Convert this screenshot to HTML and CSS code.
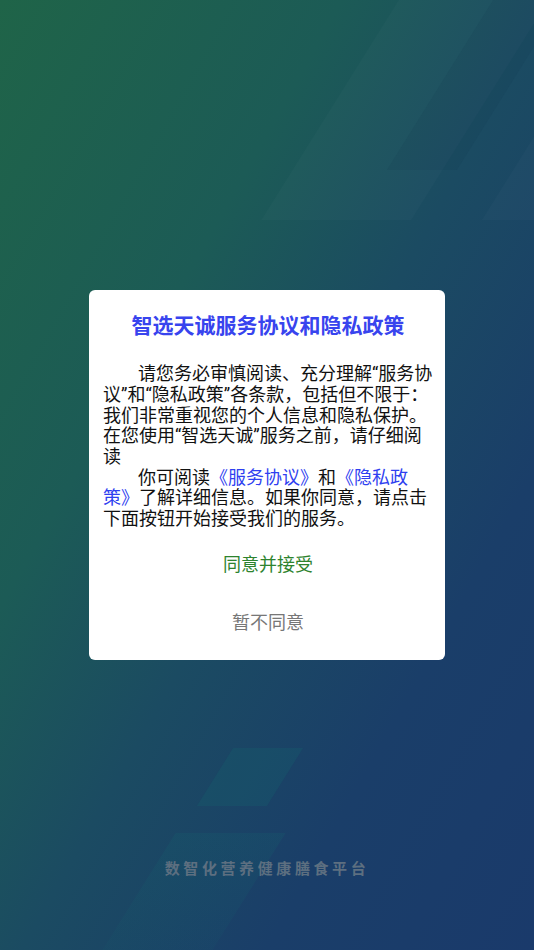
FILE: index.html
```html
<!DOCTYPE html>
<html lang="zh-CN">
<head>
  <meta charset="UTF-8">
  <title>智选天诚</title>
  <meta name="viewport" content="width=device-width, initial-scale=1.0">
  <link rel="stylesheet" href="styles.css">
</head>
<body>
  <div class="splash">
    <!-- decorative stripes -->
    <div class="stripe stripe-a"></div>
    <div class="stripe stripe-b"></div>
    <div class="stripe stripe-c"></div>
    <div class="stripe stripe-d"></div>
    <div class="stripe stripe-e"></div>

    <div class="slogan">数智化营养健康膳食平台</div>
  </div>

  <!-- Privacy dialog -->
  <div class="overlay">
    <div class="dialog">
      <div class="dialog-title">智选天诚服务协议和隐私政策</div>
      <div class="dialog-body">
        <p>请您务必审慎阅读、充分理解“服务协议”和“隐私政策”各条款，包括但不限于：我们非常重视您的个人信息和隐私保护。在您使用“智选天诚”服务之前，请仔细阅读</p>
        <p>你可阅读<a href="#">《服务协议》</a>和<a href="#">《隐私政策》</a>了解详细信息。如果你同意，请点击下面按钮开始接受我们的服务。</p>
      </div>
      <div class="dialog-actions">
        <button class="btn btn-agree">同意并接受</button>
        <button class="btn btn-refuse">暂不同意</button>
      </div>
    </div>
  </div>
</body>
</html>
```

FILE: styles.css
```css
* {
  box-sizing: border-box;
}

html, body {
  margin: 0;
  padding: 0;
  height: 100%;
  font-family: "Roboto", "Noto Sans CJK SC", sans-serif;
}

.splash {
  position: relative;
  height: 100%;
  overflow: hidden;
  display: flex;
  flex-direction: column;
  justify-content: flex-end;
  align-items: center;
  background: linear-gradient(to bottom right, #1f6448 0%, #1c5b56 32%, #1b4b62 52%, #1a3e69 75%, #1a3a6b 100%);
}

.stripe {
  position: absolute;
  transform: skewX(-32deg);
}

.stripe-a {
  left: 330px;
  top: 0;
  width: 150px;
  height: 220px;
  background: rgba(255,255,255,0.018);
}

.stripe-b {
  left: 440px;
  top: 0;
  width: 70px;
  height: 170px;
  background: rgba(10,40,60,0.08);
}

.stripe-c {
  left: 510px;
  top: 130px;
  width: 60px;
  height: 90px;
  background: rgba(255,255,255,0.02);
}

.stripe-d {
  left: 215px;
  top: 748px;
  width: 70px;
  height: 58px;
  background: rgba(20,100,110,0.28);
}

.stripe-e {
  left: 135px;
  top: 833px;
  width: 110px;
  height: 130px;
  background: linear-gradient(180deg, rgba(20,100,110,0.22), rgba(20,100,110,0.08));
}

.slogan {
  position: relative;
  margin-bottom: 72px;
  font-size: 15px;
  font-weight: bold;
  letter-spacing: 3.6px;
  color: #5d6f80;
}

.overlay {
  position: fixed;
  inset: 0;
  display: flex;
  align-items: center;
  justify-content: center;
}

.dialog {
  width: 356px;
  background: #fff;
  border-radius: 6px;
  padding: 22px 12px 8px 14px;
}

.dialog-title {
  text-align: center;
  font-size: 21px;
  line-height: 28px;
  font-weight: bold;
  color: #3844ee;
}

.dialog-body {
  margin-top: 24px;
  font-size: 18px;
  line-height: 20.7px;
  color: #111;
}

.dialog-body p {
  margin: 0;
  text-indent: 35px;
}

.dialog-body a {
  color: #2f3ff0;
  text-decoration: none;
}

.dialog-actions {
  margin-top: 6px;
  display: flex;
  flex-direction: column;
}

.btn {
  border: none;
  background: none;
  font-family: inherit;
  font-size: 18px;
  line-height: 26px;
  padding: 16px 0;
  cursor: pointer;
}

.btn-agree {
  color: #2e832e;
}

.btn-refuse {
  color: #777;
}
```
